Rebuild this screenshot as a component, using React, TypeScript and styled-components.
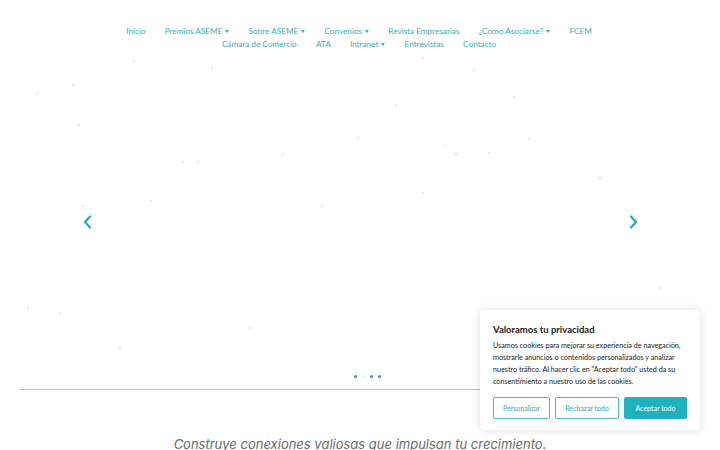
import React from "react";
import styled, { createGlobalStyle } from "styled-components";

const GlobalStyle = createGlobalStyle`
  html, body {
    margin: 0;
    padding: 0;
    background: #fff;
    font-family: Lato, "Open Sans", sans-serif;
    overflow: hidden;
  }
`;

const TEAL = "#2fb3bd";

const Page = styled.div`
  width: 720px;
  height: 450px;
  position: relative;
  overflow: hidden;
`;

const Header = styled.header`
  display: flex;
  justify-content: center;
  padding-top: 24px;
`;

const Nav = styled.nav`
  display: flex;
  flex-wrap: wrap;
  justify-content: center;
  max-width: 500px;
  padding-right: 2px;
`;

const NavItem = styled.a`
  display: flex;
  align-items: center;
  gap: 2px;
  padding: 0 9.6px;
  height: 13px;
  font-size: 8.2px;
  color: ${TEAL};
  text-decoration: none;
  white-space: nowrap;
  cursor: pointer;
`;

const Caret = styled.span`
  width: 0;
  height: 0;
  border-left: 2.8px solid transparent;
  border-right: 2.8px solid transparent;
  border-top: 3.2px solid ${TEAL};
  margin-left: 1px;
  margin-top: 1px;
`;

const Hero = styled.section`
  position: relative;
  height: 339px;
  margin: 0 20px;
  display: flex;
  align-items: center;
  justify-content: space-between;
  padding: 0 60px;
  border-bottom: 1px solid #86d0d6;
`;

const Particles = styled.svg`
  position: absolute;
  inset: 0;
  pointer-events: none;
`;

const Arrow = styled.button`
  background: none;
  border: none;
  padding: 0;
  width: 14px;
  height: 20px;
  display: flex;
  align-items: center;
  justify-content: center;
  cursor: pointer;
  margin-top: 4px;
`;

const Dots = styled.div`
  position: absolute;
  bottom: 11px;
  left: 0;
  right: 0;
  display: flex;
  justify-content: center;
  gap: 5px;
  padding-left: 14px;
`;

const Dot = styled.span<{ $active?: boolean }>`
  width: 3px;
  height: 3px;
  border-radius: 50%;
  background: ${(p) => (p.$active ? "#e4f2f3" : "#3e8d93")};
`;

const Tagline = styled.p`
  margin: 46px 0 0;
  text-align: center;
  font-family: Inter, Roboto, sans-serif;
  font-style: italic;
  font-size: 13px;
  color: #6b6b6b;
  line-height: 16px;
`;

const CookieBox = styled.div`
  position: absolute;
  right: 20px;
  bottom: 20px;
  width: 220px;
  box-sizing: border-box;
  padding: 13px 13px 11px;
  background: #fff;
  border-radius: 4px;
  box-shadow: 0 0 8px rgba(0, 0, 0, 0.14);
  font-family: Lato, "Open Sans", sans-serif;
`;

const CookieTitle = styled.h3`
  margin: 0 0 4px;
  font-size: 9.5px;
  font-weight: 700;
  color: #212121;
  line-height: 13px;
`;

const CookieText = styled.p`
  margin: 0 0 9px;
  font-size: 7.2px;
  line-height: 12px;
  color: #212121;
`;

const ButtonRow = styled.div`
  display: flex;
  gap: 5px;
`;

const CookieButton = styled.button<{ $primary?: boolean }>`
  height: 22px;
  padding: 0 9px;
  font-family: Lato, "Open Sans", sans-serif;
  font-size: 7px;
  white-space: nowrap;
  border-radius: 2px;
  border: 1.5px solid ${(p) => (p.$primary ? "#1fb1bd" : "#54b9bf")};
  background: ${(p) => (p.$primary ? "#1fb1bd" : "#fff")};
  color: ${(p) => (p.$primary ? "#fff" : "#3aa9b1")};
  flex: ${(p) => (p.$primary ? "1" : "none")};
  cursor: pointer;
`;

const navItems: { label: string; dropdown?: boolean }[] = [
  { label: "Inicio" },
  { label: "Premios ASEME", dropdown: true },
  { label: "Sobre ASEME", dropdown: true },
  { label: "Convenios", dropdown: true },
  { label: "Revista Empresarias" },
  { label: "¿Como Asociarse?", dropdown: true },
  { label: "FCEM" },
  { label: "Cámara de Comercio" },
  { label: "ATA" },
  { label: "Intranet", dropdown: true },
  { label: "Entrevistas" },
  { label: "Contacto" },
];

const particles = [
  [114, 3], [192, 10], [17, 35], [53, 27], [59, 67], [163, 104], [178, 104],
  [263, 97], [338, 80], [376, 47], [403, 0], [425, 88], [436, 96], [469, 95],
  [494, 39], [403, 135], [131, 143], [302, 148], [63, 148], [454, 12], [509, 81],
  [8, 250], [40, 255], [100, 290], [230, 270], [600, 260], [640, 230], [580, 120],
];

function Chevron({ dir }: { dir: "left" | "right" }) {
  return (
    <svg width="9" height="14" viewBox="0 0 9 14">
      <path
        d={dir === "left" ? "M7 1.5 L2 7 L7 12.5" : "M2 1.5 L7 7 L2 12.5"}
        fill="none"
        stroke="#27a9b3"
        strokeWidth="2.2"
        strokeLinecap="round"
        strokeLinejoin="round"
      />
    </svg>
  );
}

export default function App() {
  return (
    <Page>
      <GlobalStyle />
      <Header>
        <Nav>
          {navItems.map((item) => (
            <NavItem key={item.label}>
              {item.label}
              {item.dropdown && <Caret />}
            </NavItem>
          ))}
        </Nav>
      </Header>

      <Hero>
        <Particles width="680" height="339">
          {particles.map(([x, y], i) => (
            <circle key={i} cx={x} cy={y + 8} r="0.9" fill="#d8dcdc" />
          ))}
        </Particles>
        <Arrow aria-label="Anterior">
          <Chevron dir="left" />
        </Arrow>
        <Arrow aria-label="Siguiente">
          <Chevron dir="right" />
        </Arrow>
        <Dots>
          <Dot />
          <Dot $active />
          <Dot />
          <Dot />
        </Dots>
      </Hero>

      <Tagline>Construye conexiones valiosas que impulsan tu crecimiento.</Tagline>

      <CookieBox>
        <CookieTitle>Valoramos tu privacidad</CookieTitle>
        <CookieText>
          Usamos cookies para mejorar su experiencia de navegación, mostrarle anuncios o contenidos
          personalizados y analizar nuestro tráfico. Al hacer clic en "Aceptar todo" usted da su
          consentimiento a nuestro uso de las cookies.
        </CookieText>
        <ButtonRow>
          <CookieButton>Personalizar</CookieButton>
          <CookieButton>Rechazar todo</CookieButton>
          <CookieButton $primary>Aceptar todo</CookieButton>
        </ButtonRow>
      </CookieBox>
    </Page>
  );
}
